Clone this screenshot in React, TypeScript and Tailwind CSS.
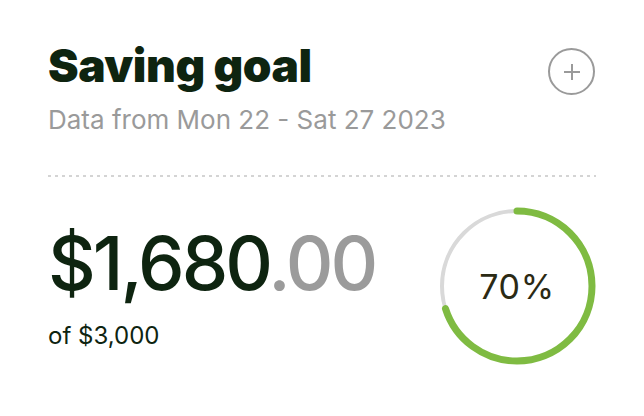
import React from "react";

export default function App() {
  const r = 75;
  const c = 2 * Math.PI * r;
  const pct = 0.7;
  return (
    <div className="w-[644px] h-[416px] bg-white px-12 pt-[42px] font-['Inter',sans-serif]">
      <div className="flex items-start justify-between">
        <div>
          <h1 className="text-[46px] leading-none font-black tracking-[-0.01em] text-[#0e2410]">
            Saving goal
          </h1>
          <p className="mt-[19px] text-[26px] leading-none text-[#9a9a9a]">
            Data from Mon 22 - Sat 27 2023
          </p>
        </div>
        <button className="mt-[6px] mr-[1px] flex h-[47px] w-[47px] items-center justify-center rounded-full border-2 border-[#9a9a9a]">
          <svg width="18" height="18" viewBox="0 0 18 18" fill="none">
            <path d="M9 1v16M1 9h16" stroke="#9a9a9a" strokeWidth="2" />
          </svg>
        </button>
      </div>
      <div className="mt-[42px] h-[2px] w-full bg-[linear-gradient(to_right,#d4d4d4_45%,transparent_0)] bg-[length:7px_2px]" />
      <div className="mt-[30px] flex items-start justify-between">
        <div className="pt-[19px]">
          <div className="text-[74px] leading-none font-medium tracking-[-0.04em] text-[#0e2410]">
            $1,680<span className="text-[#9b9b9b]">.00</span>
          </div>
          <div className="mt-[24px] text-[24px] leading-none text-[#0e2410]">of $3,000</div>
        </div>
        <div className="relative h-[158px] w-[158px]">
          <svg width="158" height="158" viewBox="0 0 158 158" className="-rotate-90">
            <circle cx="79" cy="79" r={r} fill="none" stroke="#d9d9d9" strokeWidth="4" />
            <circle
              cx="79"
              cy="79"
              r={r}
              fill="none"
              stroke="#7fbb42"
              strokeWidth="7"
              strokeLinecap="round"
              strokeDasharray={`${c * pct} ${c}`}
            />
          </svg>
          <div className="absolute inset-0 flex items-center justify-center text-[34px] tracking-[0.02em] text-[#2b2a14]">
            70%
          </div>
        </div>
      </div>
    </div>
  );
}
